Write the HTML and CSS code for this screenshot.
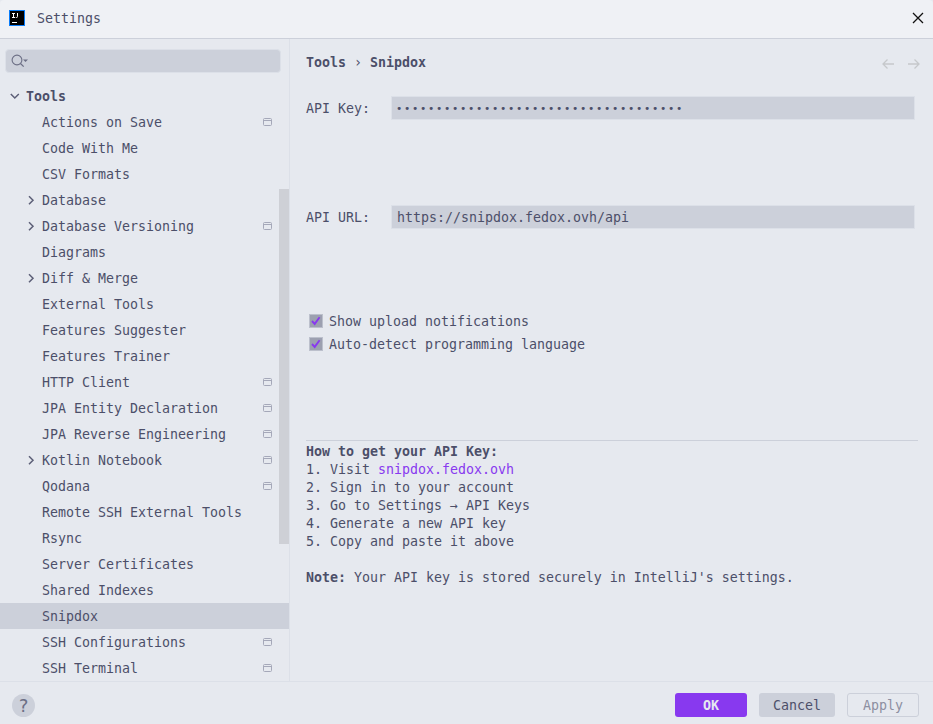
FILE: index.html
```html
<!DOCTYPE html>
<html lang="en">
<head>
<meta charset="utf-8">
<title>Settings</title>
<link rel="stylesheet" href="styles.css">
</head>
<body>
<svg class="defs" width="0" height="0" aria-hidden="true">
  <symbol id="right" viewBox="0 0 16 16"><path d="M6 4.200l4 4L6 12.200" fill="none" stroke="#5c5f77" stroke-width="1.500"/></symbol>
  <symbol id="project" viewBox="0 0 9 8"><path d="M1.500.5h6a1 1 0 0 1 1 1v5a1 1 0 0 1-1 1h-6a1 1 0 0 1-1-1v-5a1 1 0 0 1 1-1zM.5 2.500h8" fill="none" stroke="#a5a8b9"/></symbol>
  <symbol id="check" viewBox="0 0 14 14"><rect x=".5" y=".5" width="13" height="13" fill="#9ca0b0" stroke="#bcc0cc"/><path d="M3 7l2.700 2.900L10.600 3.200" fill="none" stroke="#8839ef" stroke-width="1.900"/></symbol>
</svg>
<div class="window">
  <header class="titlebar">
    <svg class="logo" width="16" height="16" viewBox="0 0 16 16"><rect width="16" height="16" fill="#087cfa"/><rect x="1" y="1" width="14" height="14" fill="#000"/><path d="M3 3.500h3M4.500 3.500v4M3 7.500h3M8.500 3v3.500q0 1-1 1H6.800M3 12.500h5" fill="none" stroke="#fff"/></svg>
    <span class="title">Settings</span>
    <svg class="close" width="12" height="12" viewBox="0 0 12 12"><path d="M1 1l10 10M11 1L1 11" stroke="#111" stroke-width="1.300"/></svg>
  </header>
  <div class="body">
    <aside class="sidebar">
      <div class="search"><svg width="20" height="14" viewBox="0 0 20 14"><circle cx="6" cy="6" r="4.900" fill="none" stroke="#6c6f85" stroke-width="1.100"/><path d="M9.500 9.500l3.200 3.200" stroke="#6c6f85" stroke-width="1.200"/><path d="M12 5.500h5L14.500 8z" fill="#6c6f85"/></svg></div>
      <ul class="tree">
        <li class="row root"><svg class="arrow down" viewBox="0 0 16 16"><use href="#right"/></svg><span>Tools</span></li>
        <li class="row"><span>Actions on Save</span><svg class="badge"><use href="#project"/></svg></li>
        <li class="row"><span>Code With Me</span></li>
        <li class="row"><span>CSV Formats</span></li>
        <li class="row group"><svg class="arrow"><use href="#right"/></svg><span>Database</span></li>
        <li class="row group"><svg class="arrow"><use href="#right"/></svg><span>Database Versioning</span><svg class="badge"><use href="#project"/></svg></li>
        <li class="row"><span>Diagrams</span></li>
        <li class="row group"><svg class="arrow"><use href="#right"/></svg><span>Diff &amp; Merge</span></li>
        <li class="row"><span>External Tools</span></li>
        <li class="row"><span>Features Suggester</span></li>
        <li class="row"><span>Features Trainer</span></li>
        <li class="row"><span>HTTP Client</span><svg class="badge"><use href="#project"/></svg></li>
        <li class="row"><span>JPA Entity Declaration</span><svg class="badge"><use href="#project"/></svg></li>
        <li class="row"><span>JPA Reverse Engineering</span><svg class="badge"><use href="#project"/></svg></li>
        <li class="row group"><svg class="arrow"><use href="#right"/></svg><span>Kotlin Notebook</span><svg class="badge"><use href="#project"/></svg></li>
        <li class="row"><span>Qodana</span><svg class="badge"><use href="#project"/></svg></li>
        <li class="row"><span>Remote SSH External Tools</span></li>
        <li class="row"><span>Rsync</span></li>
        <li class="row"><span>Server Certificates</span></li>
        <li class="row"><span>Shared Indexes</span></li>
        <li class="row selected"><span>Snipdox</span></li>
        <li class="row"><span>SSH Configurations</span><svg class="badge"><use href="#project"/></svg></li>
        <li class="row"><span>SSH Terminal</span><svg class="badge"><use href="#project"/></svg></li>
      </ul>
      <div class="scrollbar"></div>
    </aside>
    <main class="content">
      <div class="crumbs">
        <b>Tools</b><span class="sep">›</span><b>Snipdox</b>
        <svg class="nav" width="38" height="12" viewBox="0 0 38 12"><path d="M12 6H1M5.500 1.500L1 6l4.500 4.500M26 6h11M32.500 1.500L37 6l-4.500 4.500" fill="none" stroke="#c6c8cb" stroke-width="1.300"/></svg>
      </div>
      <div class="field"><label>API Key:</label><div class="input secret">••••••••••••••••••••••••••••••••••••</div></div>
      <div class="field url"><label>API URL:</label><div class="input">https://snipdox.fedox.ovh/api</div></div>
      <div class="checks">
        <label class="check"><svg width="14" height="14"><use href="#check"/></svg><span>Show upload notifications</span></label>
        <label class="check"><svg width="14" height="14"><use href="#check"/></svg><span>Auto-detect programming language</span></label>
      </div>
      <section class="help">
        <p><b>How to get your API Key:</b></p>
        <p>1. Visit <a>snipdox.fedox.ovh</a></p>
        <p>2. Sign in to your account</p>
        <p>3. Go to Settings → API Keys</p>
        <p>4. Generate a new API key</p>
        <p>5. Copy and paste it above</p>
        <p class="note"><b>Note:</b> Your API key is stored securely in IntelliJ's settings.</p>
      </section>
    </main>
  </div>
  <footer class="footer">
    <button class="help-button">?</button>
    <button class="button primary">OK</button>
    <button class="button cancel">Cancel</button>
    <button class="button disabled">Apply</button>
  </footer>
</div>
</body>
</html>
```
FILE: styles.css
```css
* { box-sizing: border-box; }
body { margin: 0; background: #e6e9ef; color: #4c4f69; font: 13.290px/18px "DejaVu Sans Mono", "Liberation Mono", monospace; font-variant-ligatures: none; }
svg { display: block; flex: none; }
.defs { position: absolute; }
p { margin: 0; }
.window { width: 933px; height: 724px; display: flex; flex-direction: column; overflow: hidden; }
.titlebar { height: 39px; flex: none; display: flex; align-items: center; padding: 0 9px 2px; background: #eff1f5; border-bottom: 1px solid #ccd0da; border-radius: 4px 4px 0 0; }
.title { margin-left: 12px; padding-top: 2px; }
.close { margin-left: auto; }
.body { height: 642px; flex: none; display: flex; }
.sidebar { position: relative; width: 290px; border-right: 1px solid #dce0e8; }
.search { width: 276px; height: 24px; margin: 10px 0 10px 5px; padding: 4px 5px; background: #ccd0da; border: 1px solid #dce0e8; border-radius: 4px; }
.tree { list-style: none; margin: 0; padding: 0; }
.row { height: 26px; display: flex; align-items: center; padding: 0 17px 0 42px; white-space: pre; }
.row span, .check span { padding-top: 2px; }
.row.root { padding-left: 7px; font-weight: bold; }
.row.group { padding-left: 23px; }
.row.selected { background: #ccd0da; }
.arrow { width: 16px; height: 16px; margin-right: 3px; }
.down { transform: rotate(90deg); }
.badge { width: 9px; height: 8px; margin-left: auto; }
.scrollbar { position: absolute; right: 0; top: 150px; width: 10px; height: 355px; background: #ced0d6; }
.content { flex: 1; padding: 15px 15px 0 16px; }
.crumbs { height: 18px; display: flex; align-items: center; }
.sep { width: 8px; margin: 0 8px; }
.nav { margin: 1px -2px 0 auto; }
.field { display: flex; align-items: center; height: 24px; margin-top: 24px; padding-right: 3px; }
.field label { width: 85px; padding-top: 2px; }
.input { flex: 1; height: 24px; padding: 0 5px; line-height: 24px; background: #ccd0da; border: 1px solid #dce0e8; white-space: pre; }
.secret { font-size: 10.500px; letter-spacing: 1.680px; padding-left: 4px; line-height: 23px; }
.field.url { margin-top: 85px; }
.checks { margin-top: 83px; padding-left: 3px; }
.check { display: flex; align-items: center; gap: 6px; height: 18px; margin-bottom: 5px; }
.help { margin: 87px 0 0; border-top: 1px solid #ccd0da; padding-top: 2px; }
.help a { color: #8839ef; }
.note { margin-top: 18px; white-space: nowrap; }
.footer { height: 43px; flex: none; display: flex; align-items: center; gap: 12px; padding: 4px 14px 0 12px; border-top: 1px solid #dce0e8; }
button { font: inherit; color: inherit; padding: 0; border: 0; }
.help-button { width: 23px; height: 23px; margin-right: auto; border-radius: 50%; background: #ccd0da; color: #6c6f85; font-size: 18px; line-height: 23px; }
.button { width: 72px; height: 24px; padding-top: 2px; border-radius: 3px; background: #ccd0da; }
.primary { background: #8839ef; color: #e6e9ef; font-weight: bold; }
.cancel { width: 76px; }
.disabled { background: none; border: 1px solid #ccd0da; color: #8c8fa1; }
```
